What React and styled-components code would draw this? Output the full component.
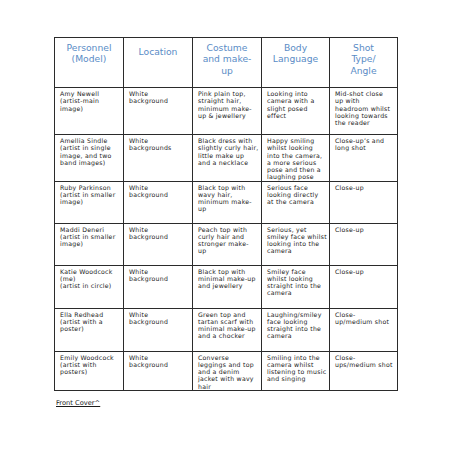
import React from 'react'
import styled, { createGlobalStyle } from 'styled-components'

const GlobalStyle = createGlobalStyle`
  body {
    margin: 0;
    background: #ffffff;
    font-family: "DejaVu Sans", "Liberation Sans", sans-serif;
  }
`

const headers = [
  { text: ['Personnel', '(Model)'] },
  { text: ['Location'], offset: 4 },
  { text: ['Costume', 'and make-', 'up'] },
  { text: ['Body', 'Language'] },
  { text: ['Shot', 'Type/', 'Angle'] },
]

const rows = [
  {
    height: 47,
    cells: [
      'Amy Newell\n(artist-main\nimage)',
      'White\nbackground',
      'Pink plain top,\nstraight hair,\nminimum make-\nup & jewellery',
      'Looking into\ncamera with a\nslight posed\neffect',
      'Mid-shot close\nup with\nheadroom whilst\nlooking towards\nthe reader',
    ],
  },
  {
    height: 45,
    cells: [
      'Amellia Sindle\n(artist in single\nimage, and two\nband images)',
      'White\nbackgrounds',
      'Black dress with\nslightly curly hair,\nlittle make up\nand a necklace',
      'Happy smiling\nwhilst looking\ninto the camera,\na more serious\npose and then a\nlaughing pose',
      'Close-up\u2019s and\nlong shot',
    ],
  },
  {
    height: 42,
    cells: [
      'Ruby Parkinson\n(artist in smaller\nimage)',
      'White\nbackground',
      'Black top with\nwavy hair,\nminimum make-\nup',
      'Serious face\nlooking directly\nat the camera',
      'Close-up',
    ],
  },
  {
    height: 42,
    cells: [
      'Maddi Deneri\n(artist in smaller\nimage)',
      'White\nbackground',
      'Peach top with\ncurly hair and\nstronger make-\nup',
      'Serious, yet\nsmiley face whilst\nlooking into the\ncamera',
      'Close-up',
    ],
  },
  {
    height: 43,
    cells: [
      'Katie Woodcock\n(me)\n(artist in circle)',
      'White\nbackground',
      'Black top with\nminimal make-up\nand jewellery',
      'Smiley face\nwhilst looking\nstraight into the\ncamera',
      'Close-up',
    ],
  },
  {
    height: 43,
    cells: [
      'Ella Redhead\n(artist with a\nposter)',
      'White\nbackground',
      'Green top and\ntartan scarf with\nminimal make-up\nand a chocker',
      'Laughing/smiley\nface looking\nstraight into the\ncamera',
      'Close-\nup/medium shot',
    ],
  },
  {
    height: 37,
    cells: [
      'Emily Woodcock\n(artist with\nposters)',
      'White\nbackground',
      'Converse\nleggings and top\nand a denim\njacket with wavy\nhair',
      'Smiling into the\ncamera whilst\nlistening to music\nand singing',
      'Close-\nups/medium shot',
    ],
  },
]

const widths = [69, 69, 69, 68, 68]

const App = () => {
  return (
    <Page>
      <GlobalStyle />
      <Table>
        <colgroup>
          {widths.map((w, i) => (
            <col key={i} style={{ width: w }} />
          ))}
        </colgroup>
        <thead>
          <Row height={50}>
            {headers.map((h, i) => (
              <HeadCell key={i}>
                <HeadText offset={h.offset || 0}>
                  {h.text.map((line, j) => (
                    <Line key={j}>{line}</Line>
                  ))}
                </HeadText>
              </HeadCell>
            ))}
          </Row>
        </thead>
        <tbody>
          {rows.map((r, i) => (
            <Row key={i} height={r.height}>
              {r.cells.map((c, j) => (
                <Cell key={j}>
                  {c.split('\n').map((line, k) => (
                    <Line key={k}>{line}</Line>
                  ))}
                </Cell>
              ))}
            </Row>
          ))}
        </tbody>
      </Table>
      <Footer>Front Cover^</Footer>
    </Page>
  )
}

const Page = styled.div`
  width: 453px;
  height: 453px;
  padding: 37px 0 0 54px;
  box-sizing: border-box;
`
const Table = styled.table`
  border-collapse: collapse;
  table-layout: fixed;
  width: 343px;
`
const Row = styled.tr`
  height: ${(props) => props.height}px;
`
const HeadCell = styled.th`
  border: 1px solid #2b2b2b;
  padding: 0 2px;
  vertical-align: top;
  font-weight: normal;
  text-align: center;
  color: #5a8cc6;
  font-size: 9.2px;
  line-height: 11.3px;
`
const HeadText = styled.div`
  padding-top: ${(props) => 4 + props.offset}px;
`
const Cell = styled.td`
  border: 1px solid #2b2b2b;
  padding: 2px 2px 0 5px;
  vertical-align: top;
  text-align: left;
  color: #1a1a1a;
  font-size: 6.2px;
  letter-spacing: 0.25px;
  line-height: 7.25px;
  overflow: hidden;
`
const Line = styled.div`
  white-space: nowrap;
`
const Footer = styled.div`
  margin: 8px 0 0 2px;
  font-size: 6.7px;
  color: #1a1a1a;
  text-decoration: underline;
`

export default App
